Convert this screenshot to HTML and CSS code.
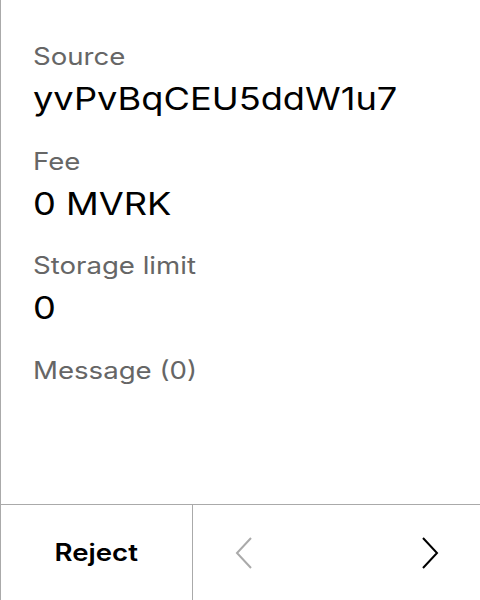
FILE: index.html
```html
<!DOCTYPE html>
<html>
<head>
<meta charset="utf-8">
<link rel="stylesheet" href="styles.css">
</head>
<body>
<div class="app">
  <div class="content">
    <div class="field">
      <div class="label"><span class="wide">Source</span></div>
      <div class="value"><span class="wide">yvPvBqCEU5ddW1u7</span></div>
    </div>
    <div class="field">
      <div class="label"><span class="wide">Fee</span></div>
      <div class="value"><span class="wide">0 MVRK</span></div>
    </div>
    <div class="field">
      <div class="label"><span class="wide">Storage limit</span></div>
      <div class="value"><span class="wide">0</span></div>
    </div>
    <div class="field">
      <div class="label"><span class="wide">Message (0)</span></div>
    </div>
  </div>
  <div class="footer">
    <button class="reject"><span class="wide center">Reject</span></button>
    <div class="nav">
      <svg class="chev" width="20" height="34" viewBox="0 0 20 34"><path d="M17 2 L3 17 L17 32" fill="none" stroke="#aaaaaa" stroke-width="2"/></svg>
      <svg class="chev" width="20" height="34" viewBox="0 0 20 34"><path d="M3 2 L17 17 L3 32" fill="none" stroke="#000" stroke-width="2"/></svg>
    </div>
  </div>
</div>
</body>
</html>
```
FILE: styles.css
```css
html, body {
  margin: 0;
  padding: 0;
  background: #fff;
}
body {
  font-family: Inter, "Noto Sans", sans-serif;
}
.app {
  width: 480px;
  height: 600px;
  box-sizing: border-box;
  border-left: 1px solid #aaaaaa;
  display: flex;
  flex-direction: column;
}
.content {
  flex: 1;
  padding: 42px 32px 0 32px;
  display: flex;
  flex-direction: column;
  gap: 25.5px;
}
.field {
  display: flex;
  flex-direction: column;
}
.wide {
  display: inline-block;
  transform: scaleX(1.15);
  transform-origin: left center;
  white-space: nowrap;
}
.wide.center {
  transform-origin: center center;
}
.label {
  font-size: 24px;
  line-height: 30px;
  height: 30px;
  color: #666666;
}
.value {
  margin-top: 5px;
  font-size: 31.5px;
  line-height: 44px;
  height: 44px;
  color: #000;
}
.footer {
  height: 96px;
  box-sizing: border-box;
  border-top: 1px solid #aaaaaa;
  display: flex;
}
.reject {
  width: 192px;
  border: none;
  border-right: 1px solid #aaaaaa;
  background: #fff;
  font-family: Inter, "Noto Sans", sans-serif;
  font-size: 24px;
  font-weight: 600;
  color: #000;
  padding: 0;
}
.nav {
  flex: 1;
  display: flex;
  align-items: center;
  justify-content: space-between;
  padding: 0 40px 0 41px;
}
```
